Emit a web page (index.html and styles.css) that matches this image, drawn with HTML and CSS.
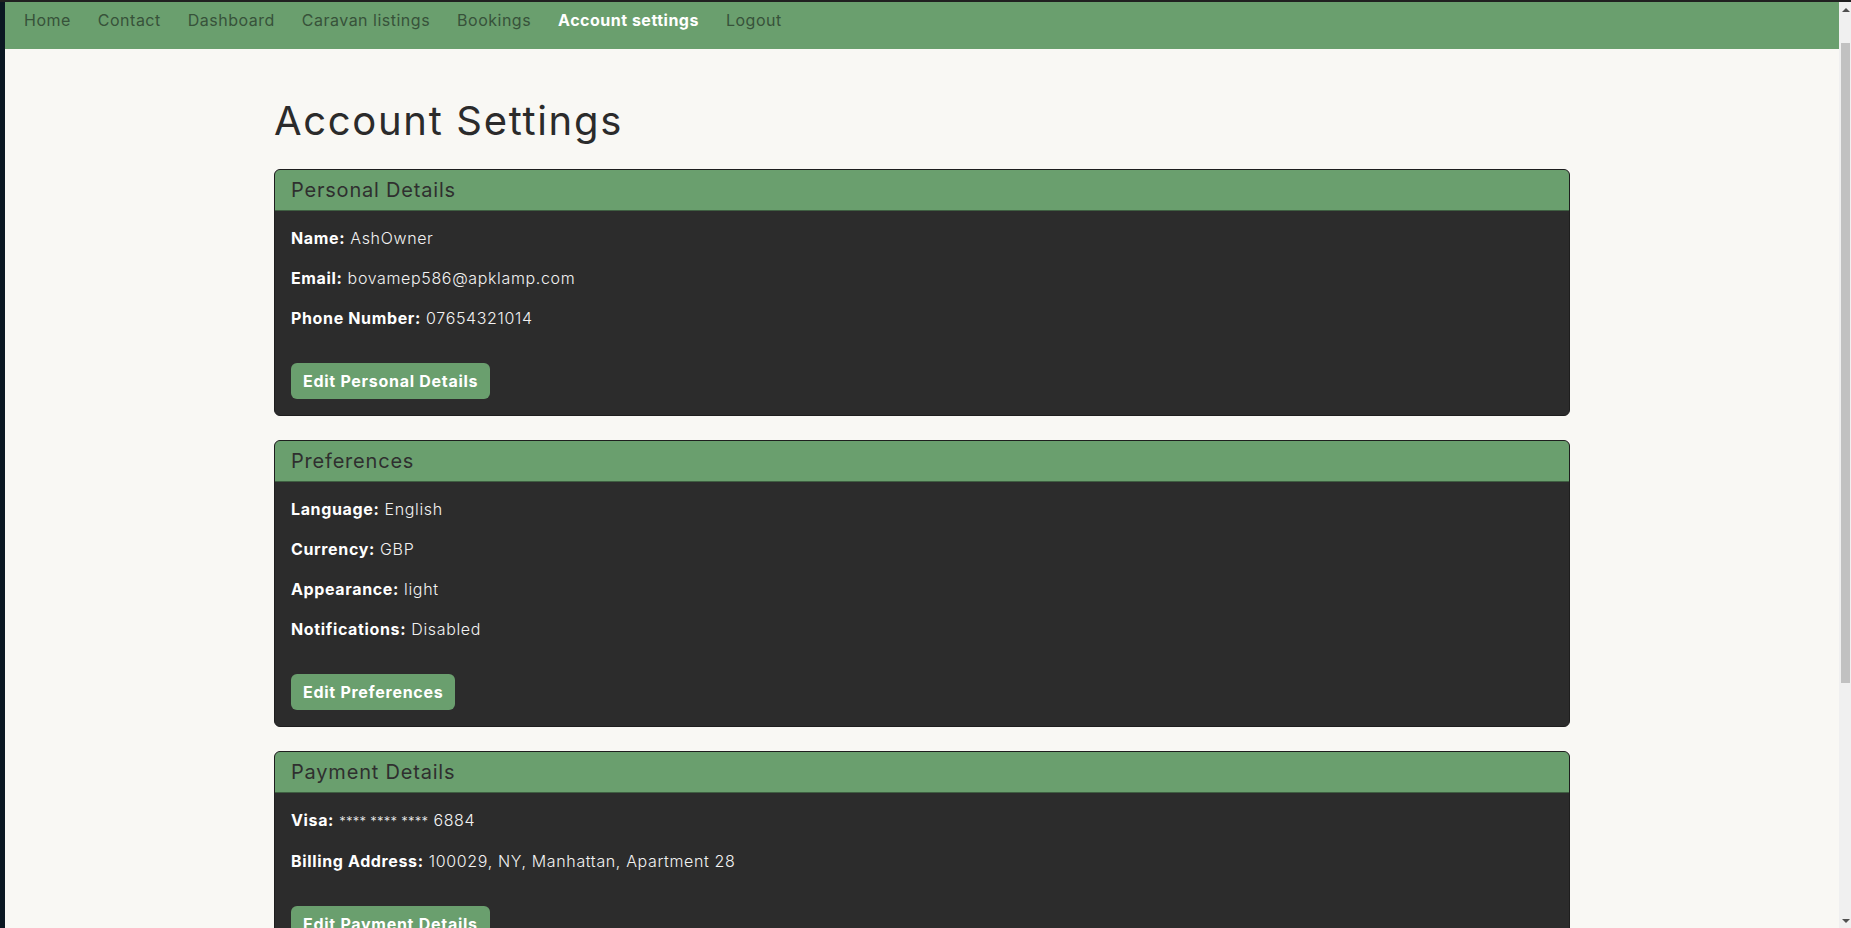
FILE: index.html
```html
<!DOCTYPE html>
<html lang="en">
<head>
<meta charset="utf-8">
<title>Account Settings</title>
<link rel="stylesheet" href="styles.css">
</head>
<body>
<div class="screen">
  <div class="desktop-edge"></div>
  <div class="viewport">
    <nav class="navbar">
      <a class="nav-link" href="#">Home</a>
      <a class="nav-link" href="#">Contact</a>
      <a class="nav-link" href="#">Dashboard</a>
      <a class="nav-link" href="#">Caravan listings</a>
      <a class="nav-link" href="#">Bookings</a>
      <a class="nav-link active" href="#">Account settings</a>
      <a class="nav-link" href="#">Logout</a>
    </nav>
    <main class="container">
      <h1 class="page-title">Account Settings</h1>

      <section class="card">
        <div class="card-header"><h5 class="card-title">Personal Details</h5></div>
        <div class="card-body">
          <p><strong>Name:</strong> AshOwner</p>
          <p><strong>Email:</strong> bovamep586@apklamp.com</p>
          <p><strong>Phone Number:</strong> 07654321014</p>
          <button class="btn">Edit Personal Details</button>
        </div>
      </section>

      <section class="card">
        <div class="card-header"><h5 class="card-title">Preferences</h5></div>
        <div class="card-body">
          <p><strong>Language:</strong> English</p>
          <p><strong>Currency:</strong> GBP</p>
          <p><strong>Appearance:</strong> light</p>
          <p><strong>Notifications:</strong> Disabled</p>
          <button class="btn">Edit Preferences</button>
        </div>
      </section>

      <section class="card">
        <div class="card-header"><h5 class="card-title">Payment Details</h5></div>
        <div class="card-body">
          <p><strong>Visa:</strong> <span class="mask">**** **** ****</span> 6884</p>
          <p><strong>Billing Address:</strong> 100029, NY, Manhattan, Apartment 28</p>
          <button class="btn">Edit Payment Details</button>
        </div>
      </section>
    </main>
  </div>
  <div class="scrollbar">
    <span class="arrow arrow-up"></span>
    <span class="thumb"></span>
    <span class="arrow arrow-down"></span>
  </div>
</div>
</body>
</html>
```

FILE: styles.css
```css
* { box-sizing: border-box; }

html, body {
  margin: 0;
  height: 100%;
  overflow: hidden;
}

body {
  background: #0a1520;
  font-family: "Inter", "DejaVu Sans", sans-serif;
  font-size: 16px;
  line-height: 24px;
  letter-spacing: 0.04em;
}

.screen {
  display: grid;
  grid-template-columns: 5px 1fr 12px;
  height: 928px;
  border-top: 2px solid #202020;
}

.desktop-edge {
  background: #0b1822;
}

.viewport {
  background: #f9f8f4;
  overflow: hidden;
  min-width: 0;
}

.navbar {
  display: flex;
  align-items: flex-start;
  gap: 27px;
  height: 47px;
  padding: 6px 19px 17px;
  background: #6a9f6e;
}

.nav-link {
  color: #37523a;
  text-decoration: none;
  font-size: 16px;
  line-height: 24px;
  letter-spacing: 0.5px;
  white-space: nowrap;
}

.nav-link.active {
  color: #ffffff;
  font-weight: 700;
}

.container {
  max-width: 1320px;
  margin: 0 auto;
  padding: 48px 12px 0;
}

.page-title {
  margin: 0 0 24px;
  font-size: 40px;
  line-height: 48px;
  font-weight: 400;
  letter-spacing: 0.042em;
  color: #2b2b2b;
}

.card {
  border: 1px solid #1e1e1e;
  border-radius: 6px;
  overflow: hidden;
  margin-bottom: 24px;
  background: #2c2c2c;
}

.card-header {
  background: #6a9f6e;
  padding: 8px 16px;
  border-bottom: 1px solid #3f5f42;
}

.card-title {
  margin: 0;
  font-size: 20px;
  line-height: 24px;
  font-weight: 400;
  letter-spacing: 0.04em;
  color: #2f2f2f;
}

.card-body {
  padding: 15px 16px 16px;
  color: #f2f2f2;
}

.card-body p {
  margin: 0 0 16px;
  font-weight: 300;
}

.card-body strong {
  font-weight: 700;
  color: #ffffff;
}

.mask {
  font-size: 13px;
  letter-spacing: 0.02em;
}

.btn {
  display: block;
  margin-top: 33px;
  height: 36px;
  padding: 6px 12px;
  border: 0;
  border-radius: 6px;
  background: #6a9f6e;
  color: #ffffff;
  font-family: inherit;
  font-size: 16px;
  line-height: 24px;
  font-weight: 700;
  letter-spacing: 0.045em;
}

.scrollbar {
  display: flex;
  flex-direction: column;
  align-items: stretch;
  background: #f0f0f0;
  padding: 0 1px 0 2px;
}

.arrow {
  align-self: center;
  width: 0;
  height: 0;
  border-left: 4px solid transparent;
  border-right: 4px solid transparent;
}

.arrow-up {
  margin-top: 6px;
  border-bottom: 4px solid #505050;
}

.thumb {
  margin-top: 31px;
  height: 640px;
  background: #c1c1c1;
}

.arrow-down {
  margin-top: auto;
  margin-bottom: 5px;
  border-top: 4px solid #505050;
}
```
